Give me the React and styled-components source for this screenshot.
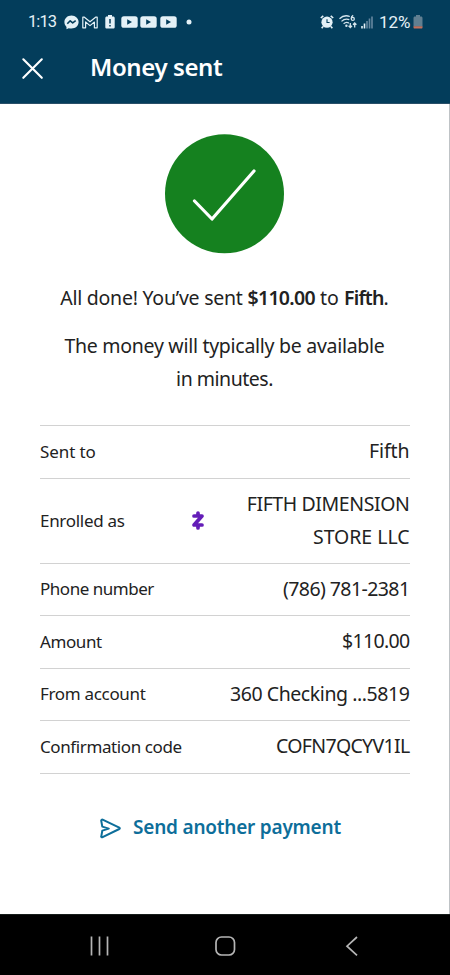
import React from 'react';
import styled, { createGlobalStyle } from 'styled-components';

const GlobalStyle = createGlobalStyle`
  * { box-sizing: border-box; }
  body { margin: 0; background: #fff; }
`;

const Screen = styled.div`
  display: flex;
  flex-direction: column;
  width: 450px;
  height: 975px;
  overflow: hidden;
  background: #fff;
  color: #222;
  font-family: 'Noto Sans', sans-serif;
  white-space: nowrap;
`;

const Header = styled.header`
  height: 104px;
  flex: none;
  background: #033d5b;
  color: #fff;
  border-bottom: 1px solid #294f68;
`;

const StatusBar = styled.div`
  display: flex;
  justify-content: space-between;
  align-items: center;
  height: 44px;
  padding: 0 27px 0 28px;
  color: #e4f1f7;
  font-family: Roboto, sans-serif;
`;

const StatusGroup = styled.div`
  display: flex;
  align-items: center;
`;

const StatusText = styled.span`
  margin-left: ${(p) => p.$gap || 0}px;
  font-size: ${(p) => p.$size}px;
  line-height: 20px;
  letter-spacing: ${(p) => p.$track}px;
  width: ${(p) => p.$width}px;
`;

const Icon = styled.svg`
  display: block;
  flex: none;
  overflow: visible;
  margin-left: ${(p) => p.$gap || 0}px;
`;

const TitleBar = styled.div`
  display: flex;
  align-items: center;
  height: 48px;
  padding-left: 22px;
`;

const Title = styled.h1`
  margin: 0 0 3px 46px;
  font-size: 24px;
  line-height: 32px;
  font-weight: 600;
  letter-spacing: -0.4px;
`;

const Content = styled.main`
  display: flex;
  flex-direction: column;
  flex: 1;
  padding: 30px 40px 0;
  border-right: 1px solid #bfc3c6;
`;

const SuccessMark = styled(Icon)`
  align-self: center;
`;

const Message = styled.p`
  margin: ${(p) => p.$top}px 0 0;
  text-align: center;
  font-size: 19.5px;
  line-height: 33px;
`;

const Run = styled.span`
  letter-spacing: ${(p) => p.$track}px;
  font-weight: ${(p) => (p.$bold ? 600 : 400)};
`;

const Details = styled.dl`
  width: 369.5px;
  margin: 30px 0 0;
  border-top: 1px solid #d2d2d2;
`;

const DetailRow = styled.div`
  display: flex;
  align-items: center;
  height: ${(p) => p.$height || 52.5}px;
  border-bottom: 1px solid #d2d2d2;
`;

const Label = styled.dt`
  font-size: 17px;
  line-height: 24px;
  letter-spacing: ${(p) => p.$track}px;
`;

const Value = styled.dd`
  margin: 0 0 0 auto;
  padding-bottom: 2px;
  text-align: right;
  font-size: 19.5px;
  line-height: 33px;
`;

const ZelleMark = styled(Icon)`
  margin-left: 67px;
`;

const Action = styled.button`
  display: flex;
  align-items: center;
  align-self: center;
  margin: 37px 8px 0 0;
  padding: 0;
  border: 0;
  background: none;
  color: #0d6e9a;
  font: 600 19px/32px 'Noto Sans', sans-serif;
  letter-spacing: -0.22px;
`;

const ActionIcon = styled(Icon)`
  margin-top: 3px;
`;

const ActionText = styled.span`
  margin-left: 12px;
`;

const NavBar = styled.nav`
  display: flex;
  align-items: center;
  height: 61px;
  flex: none;
  padding: 2px 0 0 89px;
  background: #000;
  border-top: 1px solid #161c1a;
`;

const details = [
  { label: 'Sent to', track: -0.1, lines: [['Fifth', -0.1]] },
  {
    label: 'Enrolled as', track: -0.3, zelle: true, height: 85.2,
    lines: [['FIFTH DIMENSION', -0.4], ['STORE LLC', -0.03]],
  },
  { label: 'Phone number', track: -0.48, lines: [['(786) 781-2381', -0.58]] },
  { label: 'Amount', track: -0.4, lines: [['$110.00', -0.65]] },
  { label: 'From account', track: -0.32, lines: [['360 Checking ...5819', -0.43]] },
  { label: 'Confirmation code', track: -0.4, lines: [['COFN7QCYV1IL', -0.67]] },
];

const YouTubeIcon = ({ gap }) => (
  <Icon $gap={gap} width="17" height="12" viewBox="0 0 17 12">
    <rect x="0.3" y="0.2" width="16.4" height="11.6" rx="2.6" fill="#e4f1f7" />
    <path d="M6.2 3.3 11 6l-4.8 2.7z" fill="#033d5b" />
  </Icon>
);

function NotificationIcons() {
  return (
    <>
      <Icon $gap={6.5} width="15" height="15" viewBox="0 0 15 15">
        <path d="M7.5.4C3.4.4.4 3.3.4 7.1c0 2 .8 3.6 2.1 4.8v2.4l2.2-1.1c.9.3 1.8.4 2.8.4 4.1 0 7.1-2.8 7.1-6.5S11.6.4 7.5.4z" fill="#e4f1f7" />
        <path d="m3.3 8.8 2.9-3 2.5 2.1 3-2.2" fill="none" stroke="#033d5b" strokeWidth="1.6" strokeLinejoin="round" />
      </Icon>
      <Icon $gap={3.5} width="16" height="13" viewBox="0 0 16 13">
        <path d="M.8 11.8V1.2h1.6L8 5.8l5.6-4.6h1.600v10.600h-2.800V6L8 9.600 3.600 6v5.800z" fill="none" stroke="#e4f1f7" strokeWidth="1.2" strokeLinejoin="round" />
      </Icon>
      <Icon $gap={6.5} width="10" height="14" viewBox="0 0 10 14">
        <path d="M3 0h4v1.500h1.200c.9 0 1.500.6 1.500 1.500v9c0 .9-.6 1.600-1.500 1.600H1.800C.9 13.600.3 12.900.3 12V3c0-.9.6-1.500 1.500-1.500H3z" fill="#e4f1f7" />
        <path d="M5 4.100v4.300M5 10v1.500" stroke="#033d5b" strokeWidth="1.500" />
      </Icon>
      <YouTubeIcon gap={6} />
      <YouTubeIcon gap={2.600} />
      <YouTubeIcon gap={2.600} />
      <Icon $gap={9} width="6" height="6" viewBox="0 0 6 6">
        <circle cx="3" cy="3" r="2.500" fill="#e4f1f7" />
      </Icon>
    </>
  );
}

function SystemIcons() {
  return (
    <>
      <Icon width="14" height="14" viewBox="0 0 14 14">
        <path d="m.8 3 2.500-2.200M13.200 3 10.700.8M3 11.500l-1.300 1.800M11 11.500l1.300 1.800" stroke="#e4f1f7" strokeWidth="1.600" />
        <circle cx="7" cy="7.200" r="5.600" fill="#e4f1f7" />
        <path d="M7 4.200v3.300h2.600" fill="none" stroke="#033d5b" strokeWidth="1.100" />
      </Icon>
      <Icon $gap={5.500} width="18" height="14" viewBox="0 0 18 14">
        <g fill="none" stroke="#d5e5ed" strokeWidth="1.300">
          <path d="M.5 3.800C3.600.7 7.500.2 10.800 1.500" />
          <path d="M2.500 6.400C4.800 4.200 7.700 3.600 10.300 4.700" />
          <path d="M4.600 8.800c1.700-1.500 3.700-1.700 5.300-.7" />
          <path d="M14.200.4c-1.400.8-2 1.900-2 3.100" />
          <circle cx="13.800" cy="3.900" r="1.500" />
          <path d="M11.300 8v4.500m-1.700-1.700 1.700 1.800 1.700-1.800M15.700 12.500V8m-1.700 1.700L15.700 8l1.700 1.700" />
        </g>
        <circle cx="7.400" cy="10.800" r="1.200" fill="#d5e5ed" />
      </Icon>
      <Icon $gap={4} width="12" height="13" viewBox="0 0 12 13">
        <path d="M1 10v2.500M3.500 7.500v5" stroke="#e4f1f7" strokeWidth="1.600" />
        <path d="M6 5v7.500M8.500 2.500v10M11 .5v12" stroke="#6688a0" strokeWidth="1.600" />
      </Icon>
    </>
  );
}

export default function App() {
  return (
    <Screen>
      <GlobalStyle />
      <Header>
        <StatusBar>
          <StatusGroup>
            <StatusText $size={16.5} $track={-0.9} $width={29}>1:13</StatusText>
            <NotificationIcons />
          </StatusGroup>
          <StatusGroup>
            <SystemIcons />
            <StatusText $gap={6} $size={17} $track={0} $width={34}>12%</StatusText>
            <Icon width="10" height="14" viewBox="0 0 10 14">
              <path d="M3 0h4v1.500h1c1 0 1.500.6 1.500 1.500v8.500h-9V3c0-.9.5-1.500 1.500-1.500h1z" fill="#617f91" />
              <path d="M.5 11.200h9v1.200c0 .7-.4 1.200-1 1.200h-7c-.6 0-1-.5-1-1.200z" fill="#c4705c" />
            </Icon>
          </StatusGroup>
        </StatusBar>
        <TitleBar>
          <Icon width="22" height="22" viewBox="0 0 22 22">
            <path d="M1.300 2.300 19.800 20.800M19.800 2.300 1.300 20.800" stroke="#fff" strokeWidth="2.100" strokeLinecap="round" />
          </Icon>
          <Title>Money sent</Title>
        </TitleBar>
      </Header>

      <Content>
        <SuccessMark width="120" height="120" viewBox="0 0 120 120">
          <circle cx="59.500" cy="59.700" r="59.500" fill="#15811f" />
          <path d="M29.500 67 47 85 89 37" fill="none" stroke="#fff" strokeWidth="3.200" strokeLinecap="round" strokeLinejoin="round" />
        </SuccessMark>
        <Message $top={27}>
          <Run $track={-0.24}>All done! You’ve sent </Run>
          <Run $bold $track={-0.68}>$110.00</Run>
          <Run> to </Run>
          <Run $bold $track={-0.8}>Fifth</Run>.
        </Message>
        <Message $top={15}>
          <Run $track={-0.28}>The money will typically be available</Run>
          <br />
          <Run $track={-0.48}>in minutes.</Run>
        </Message>

        <Details>
          {details.map((row) => (
            <DetailRow key={row.label} $height={row.height}>
              <Label $track={row.track}>{row.label}</Label>
              {row.zelle && (
                <ZelleMark width="12" height="19" viewBox="0 0 12 19">
                  <path d="M6 2v2.500M6 14.500V17M2 5h8L2 14h8" fill="none" stroke="#641db8" strokeWidth="3.700" strokeLinejoin="round" strokeLinecap="round" />
                </ZelleMark>
              )}
              <Value>
                {row.lines.map(([text, track]) => (
                  <div key={text}><Run $track={track}>{text}</Run></div>
                ))}
              </Value>
            </DetailRow>
          ))}
        </Details>

        <Action>
          <ActionIcon width="21" height="21" viewBox="0 0 21 21">
            <path d="M1.200 2.600c0-.8.7-1.200 1.400-.9l16.700 7.900c.7.400.7 1 0 1.400L2.600 19.200c-.8.4-1.500-.1-1.300-.9L2.300 12.600l6.500-2-6.500-2z" fill="none" stroke="#0d6e9a" strokeWidth="2" strokeLinejoin="round" strokeLinecap="round" />
          </ActionIcon>
          <ActionText>Send another payment</ActionText>
        </Action>
      </Content>

      <NavBar>
        <Icon width="20" height="20" viewBox="0 0 20 20">
          <path d="M2.500.5v19M10.500.5v19M18.500.5v19" stroke="#b5b5b5" strokeWidth="1.700" />
        </Icon>
        <Icon $gap={106} width="20" height="20" viewBox="0 0 20 20">
          <rect x="1" y="1" width="18.500" height="18" rx="5.500" fill="none" stroke="#b5b5b5" strokeWidth="1.700" />
        </Icon>
        <Icon $gap={110} width="13" height="20" viewBox="0 0 13 20">
          <path d="M12 1 2 10.200 12 19.300" fill="none" stroke="#b5b5b5" strokeWidth="1.700" />
        </Icon>
      </NavBar>
    </Screen>
  );
}
